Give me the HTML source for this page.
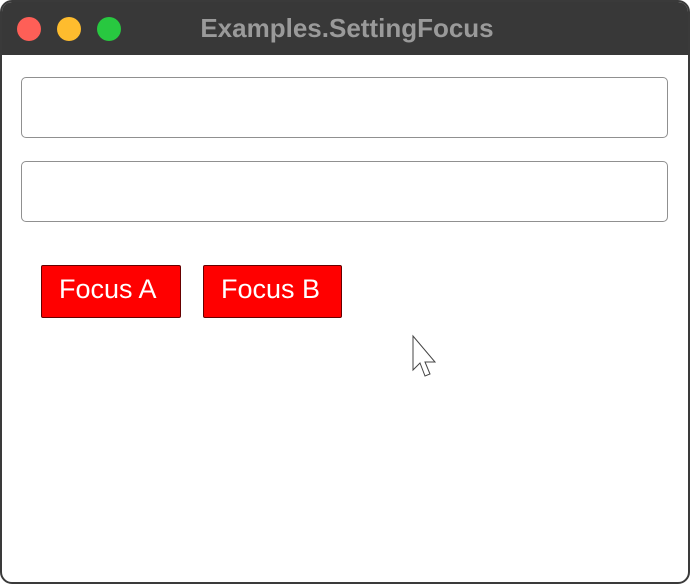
<!DOCTYPE html>
<html><head><style>
body{margin:0;width:690px;height:584px;background:#fff;overflow:hidden;font-family:"Liberation Sans",sans-serif;}
.win{position:absolute;left:0;top:0;width:686px;height:580px;border:2px solid #3a3a3a;border-radius:12px;overflow:hidden;background:#fff;}
.tb{position:absolute;left:0;top:0;width:100%;height:53px;background:#383838;}
.dot{position:absolute;top:15px;width:24px;height:24px;border-radius:50%;}
.title{position:absolute;left:0;right:0;top:11px;text-align:center;color:#9a9a9a;font-weight:bold;font-size:26px;padding-left:4px;}
.tf{position:absolute;left:19px;width:645px;height:59px;border:1px solid #909090;border-radius:5px;}
.btn{position:absolute;top:263px;height:51px;background:#ff0000;border:1px solid #600;border-radius:2px;color:#fff;font-size:27px;line-height:46px;}
</style></head><body>
<div class="win">
<div class="tb">
<div class="dot" style="left:15px;background:#fe5f57"></div>
<div class="dot" style="left:55px;background:#febc2e"></div>
<div class="dot" style="left:95px;background:#28c840"></div>
<div class="title">Examples.SettingFocus</div>
</div>
<div class="tf" style="top:75px"></div>
<div class="tf" style="top:159px"></div>
<div class="btn" style="left:39px;width:138px;"><span style="padding-left:17px">Focus A</span></div>
<div class="btn" style="left:201px;width:137px;"><span style="padding-left:17px">Focus B</span></div>
<svg style="position:absolute;left:409px;top:332px" width="30" height="48" viewBox="0 0 30 48">
<path d="M2 2 L2 36 L9 29 L14 42 L19 40 L14 28 L24 28 Z" fill="#fff" stroke="#444" stroke-width="1"/>
</svg>
</div>
</body></html>
